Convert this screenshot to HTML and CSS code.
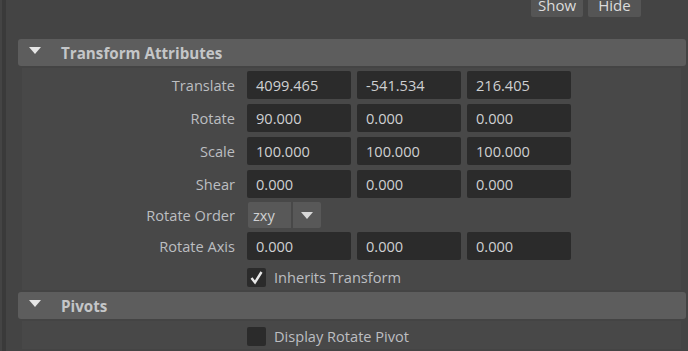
FILE: index.html
```html
<!DOCTYPE html>
<html lang="en">
<head>
  <meta charset="UTF-8">
  <title>Attribute Editor</title>
  <link rel="stylesheet" href="styles.css">
</head>
<body>
  <div class="page">
    <div class="rail"></div>
    <div class="editor">
      <!-- Show / Hide -->
      <div class="toolbar">
        <button class="tool-btn show">Show</button>
        <button class="tool-btn hide">Hide</button>
      </div>

      <!-- Transform Attributes -->
      <div class="section">
        <div class="section-head">
          <span class="arrow"></span>
          <span class="title">Transform Attributes</span>
        </div>
        <div class="section-body">
          <div class="row">
            <span class="label">Translate</span>
            <span class="field">4099.465</span>
            <span class="field">-541.534</span>
            <span class="field">216.405</span>
          </div>
          <div class="row">
            <span class="label">Rotate</span>
            <span class="field">90.000</span>
            <span class="field">0.000</span>
            <span class="field">0.000</span>
          </div>
          <div class="row">
            <span class="label">Scale</span>
            <span class="field">100.000</span>
            <span class="field">100.000</span>
            <span class="field">100.000</span>
          </div>
          <div class="row">
            <span class="label">Shear</span>
            <span class="field">0.000</span>
            <span class="field">0.000</span>
            <span class="field">0.000</span>
          </div>
          <div class="row row-small">
            <span class="label">Rotate Order</span>
            <div class="combo">
              <span class="combo-value">zxy</span>
              <span class="combo-btn"><span class="combo-arrow"></span></span>
            </div>
          </div>
          <div class="row">
            <span class="label">Rotate Axis</span>
            <span class="field">0.000</span>
            <span class="field">0.000</span>
            <span class="field">0.000</span>
          </div>
          <div class="row row-check">
            <span class="label"></span>
            <span class="checkbox checked">
              <svg width="19" height="19" viewBox="0 0 19 19"><path d="M4.5 10 L8 14.5 L14.5 4" fill="none" stroke="#e8e8e8" stroke-width="2.4"/></svg>
            </span>
            <span class="check-text">Inherits Transform</span>
          </div>
        </div>
      </div>

      <!-- Pivots -->
      <div class="section">
        <div class="section-head">
          <span class="arrow"></span>
          <span class="title">Pivots</span>
        </div>
        <div class="section-body">
          <div class="row row-check">
            <span class="label"></span>
            <span class="checkbox"></span>
            <span class="check-text">Display Rotate Pivot</span>
          </div>
        </div>
      </div>
    </div>
  </div>
</body>
</html>
```

FILE: styles.css
```css
* {
  margin: 0;
  padding: 0;
  box-sizing: border-box;
}
body {
  background: #444444;
  font-family: "Open Sans", sans-serif;
  font-size: 14.6px;
  color: #bcbec1;
  overflow: hidden;
}
.page {
  display: flex;
  height: 351px;
}
.rail {
  width: 4px;
  margin-left: 2px;
  background: #3a3a3a;
  flex: none;
}
.editor {
  flex: 1;
  padding-left: 12px;
  padding-right: 2px;
}
.toolbar {
  display: flex;
  justify-content: flex-end;
  gap: 5px;
  margin-top: -8px;
  padding-right: 45px;
  height: 25px;
}
.tool-btn {
  background: #555555;
  border: none;
  border-radius: 2px;
  color: #dcdcdc;
  font-family: "Open Sans", sans-serif;
  font-size: 15px;
  height: 25px;
  line-height: 17px;
  padding-top: 1px;
}
.show { width: 52px; }
.hide { width: 53px; }
.section {
  display: flex;
  flex-direction: column;
  gap: 2px;
}
.toolbar + .section {
  margin-top: 22px;
}
.section + .section {
  margin-top: 2px;
}
.section-head {
  display: flex;
  align-items: center;
  height: 27px;
  background: #5d5d5d;
  border-radius: 3px;
}
.arrow {
  width: 0;
  height: 0;
  margin-left: 11px;
  border-left: 6.5px solid transparent;
  border-right: 6.5px solid transparent;
  border-top: 7px solid #e6e6e6;
  margin-top: -4px;
}
.title {
  margin-left: 20px;
  font-weight: 700;
  color: #c4c6c8;
  font-size: 15.2px;
}
.section-body {
  margin-left: 4px;
  margin-right: 5px;
  background: #484848;
  padding-top: 3px;
  padding-bottom: 3px;
  display: flex;
  flex-direction: column;
  gap: 5px;
}
.row {
  display: flex;
  align-items: center;
  gap: 6px;
  height: 28px;
}
.label {
  width: 219px;
  padding-right: 6px;
  text-align: right;
  flex: none;
}
.field {
  width: 104px;
  height: 28px;
  background: #2b2b2b;
  border-radius: 2px;
  color: #cfd0d2;
  padding-left: 9px;
  line-height: 28px;
}
.row-small {
  height: 26px;
  margin-top: -1px;
}
.row-small + .row {
  margin-top: -1px;
}
.combo {
  display: flex;
  gap: 2px;
  height: 26px;
  margin-left: 1px;
}
.combo-value {
  width: 43px;
  background: #585858;
  border-radius: 2px 0 0 2px;
  color: #cfd0d2;
  padding-left: 5px;
  line-height: 26px;
}
.combo-btn {
  width: 28px;
  background: #585858;
  border-radius: 0 2px 2px 0;
  display: flex;
  align-items: center;
  justify-content: center;
}
.combo-arrow {
  width: 0;
  height: 0;
  border-left: 6px solid transparent;
  border-right: 6px solid transparent;
  border-top: 7px solid #d8d8d8;
}
.row-check {
  height: 20px;
  gap: 8px;
}
.section-body .row-check:last-child {
  margin-top: 2px;
}
.row-check .label {
  width: 219px;
  margin-right: -2px;
}
.checkbox {
  width: 19px;
  height: 19px;
  background: #2b2b2b;
  border-radius: 2px;
  display: flex;
}
.check-text {
  color: #bcbec1;
}
```
